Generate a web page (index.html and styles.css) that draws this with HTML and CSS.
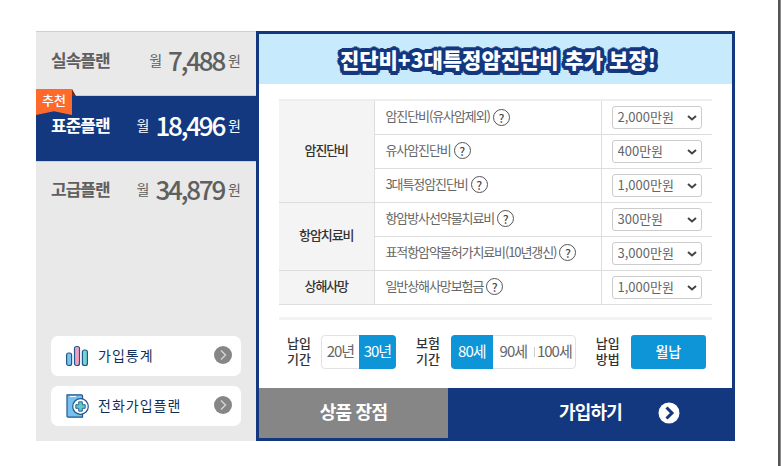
FILE: index.html
```html
<!DOCTYPE html>
<html lang="ko">
<head>
    <meta charset="UTF-8">
    <meta name="viewport" content="width=device-width, initial-scale=1.0">
    <title>암보험 플랜</title>
    <link rel="stylesheet" href="styles.css">
</head>
<body>
    <div class="wrap">
        <!-- Plan list -->
        <div class="plans">
            <div class="plan">
                <span class="plan-name">실속플랜</span>
                <span class="plan-price"><span class="unit mon">월</span><b>7,488</b><span class="unit">원</span></span>
            </div>
            <div class="plan active">
                <span class="badge">추천</span>
                <span class="plan-name">표준플랜</span>
                <span class="plan-price"><span class="unit mon">월</span><b>18,496</b><span class="unit">원</span></span>
            </div>
            <div class="plan">
                <span class="plan-name">고급플랜</span>
                <span class="plan-price"><span class="unit mon">월</span><b>34,879</b><span class="unit">원</span></span>
            </div>
            <div class="side-links">
                <a class="side-link">
                    <svg class="side-icon" width="22" height="22" viewBox="0 0 22 22">
                        <rect x="0.600" y="8" width="5" height="12.500" rx="2" fill="#7cc4ea" stroke="#23558f" stroke-width="1.200"/>
                        <rect x="8.500" y="1.500" width="5" height="19" rx="2" fill="#f0a3bd" stroke="#23558f" stroke-width="1.200"/>
                        <rect x="16.400" y="5" width="5" height="15.500" rx="2" fill="#6fd6cf" stroke="#23558f" stroke-width="1.200"/>
                    </svg>
                    <span class="side-text">가입통계</span>
                    <span class="side-arrow"><svg width="18" height="18" viewBox="0 0 18 18"><path d="M7 4.500 11.500 9 7 13.500" fill="none" stroke="#d5d5d5" stroke-width="1.400"/></svg></span>
                </a>
                <a class="side-link">
                    <svg class="side-icon" width="23" height="24" viewBox="0 0 23 24">
                        <path d="M1 .8h14.500a1 1 0 0 1 1 1V23.200H2a1 1 0 0 1-1-1z" fill="#75c0ee" stroke="#23558f" stroke-width="1.200"/>
                        <path d="M4 2.600h6" stroke="#fff" stroke-width="1"/>
                        <circle cx="14.500" cy="12.500" r="7.800" fill="#fff" stroke="#23558f" stroke-width="1.200"/>
                        <path d="M12.700 7.800h3.600v2.900h2.900v3.600h-2.900v2.900h-3.600v-2.900H9.800v-3.600h2.900z" fill="#58cfc6" stroke="#23558f" stroke-width=".9"/>
                    </svg>
                    <span class="side-text">전화가입플랜</span>
                    <span class="side-arrow"><svg width="18" height="18" viewBox="0 0 18 18"><path d="M7 4.500 11.500 9 7 13.500" fill="none" stroke="#d5d5d5" stroke-width="1.400"/></svg></span>
                </a>
            </div>
        </div>

        <!-- Coverage panel -->
        <div class="panel">
            <h2 class="panel-title"><span>진단비+3대특정암진단비 추가 보장!</span></h2>
            <div class="panel-body">
                <table class="cover">
                    <tr>
                        <th rowspan="3">암진단비</th>
                        <td class="cover-name">암진단비(유사암제외)<i class="help">?</i></td>
                        <td class="cover-sel"><select><option>2,000만원</option></select></td>
                    </tr>
                    <tr>
                        <td class="cover-name">유사암진단비<i class="help">?</i></td>
                        <td class="cover-sel"><select><option>400만원</option></select></td>
                    </tr>
                    <tr>
                        <td class="cover-name">3대특정암진단비<i class="help">?</i></td>
                        <td class="cover-sel"><select><option>1,000만원</option></select></td>
                    </tr>
                    <tr>
                        <th rowspan="2">항암치료비</th>
                        <td class="cover-name">항암방사선약물치료비<i class="help">?</i></td>
                        <td class="cover-sel"><select><option>300만원</option></select></td>
                    </tr>
                    <tr>
                        <td class="cover-name">표적항암약물허가치료비(10년갱신)<i class="help">?</i></td>
                        <td class="cover-sel"><select><option>3,000만원</option></select></td>
                    </tr>
                    <tr>
                        <th>상해사망</th>
                        <td class="cover-name">일반상해사망보험금<i class="help">?</i></td>
                        <td class="cover-sel"><select><option>1,000만원</option></select></td>
                    </tr>
                </table>

                <div class="terms">
                    <div class="term term-pay">
                        <span class="term-label">납입<br>기간</span>
                        <div class="seg">
                            <span class="seg-item">20년</span>
                            <span class="seg-item on">30년</span>
                        </div>
                    </div>
                    <div class="term term-ins">
                        <span class="term-label">보험<br>기간</span>
                        <div class="seg">
                            <span class="seg-item on">80세</span>
                            <span class="seg-item">90세</span>
                            <span class="seg-item sep">100세</span>
                        </div>
                    </div>
                    <div class="term term-way">
                        <span class="term-label">납입<br>방법</span>
                        <span class="way-btn">월납</span>
                    </div>
                </div>
            </div>
            <div class="actions">
                <a class="btn-merit"><span>상품 장점</span></a>
                <a class="btn-join"><span>가입하기</span>
                    <svg width="22" height="22" viewBox="0 0 22 22"><circle cx="11" cy="11" r="10.500" fill="#fff"/><path d="M8.500 5.500 14 11l-5.500 5.500" fill="none" stroke="#14387f" stroke-width="3"/></svg>
                </a>
            </div>
        </div>
    </div>
    <div class="edge"></div>
</body>
</html>
```

FILE: styles.css
```css
html, body {
    height: 100%;
}
body {
    margin: 0;
    background-color: #fff;
    font-family: "Noto Sans CJK KR", "Noto Sans", sans-serif;
    overflow: hidden;
}
.wrap {
    display: flex;
    width: 699px;
    height: 410px;
    margin: 31px 0 0 36px;
}

/* left side */
.plans {
    width: 220px;
    background-color: #e9e9e9;
    display: flex;
    flex-direction: column;
}
.plan {
    position: relative;
    height: 64px;
    box-sizing: border-box;
    border-top: 1px solid #cfcfcf;
    padding: 0 15px 8px;
    display: flex;
    align-items: center;
    justify-content: space-between;
    color: #5f5f5f;
}
.plan + .plan {
    height: 66px;
}
.plan:nth-child(3) {
    padding-bottom: 12px;
}
.plan-name {
    font-size: 17px;
    font-weight: 700;
    letter-spacing: -1px;
}
.plan-price {
    display: flex;
    align-items: center;
}
.plan-price b {
    font-size: 26px;
    font-weight: 500;
    letter-spacing: -2.2px;
    margin: 0 4px 0 6px;
}
.unit {
    font-size: 14px;
}
.plan.active {
    background-color: #14387f;
    color: #fff;
}
.badge {
    position: absolute;
    left: 0;
    top: -7px;
    width: 36px;
    height: 26px;
    box-sizing: border-box;
    padding-top: 1px;
    background-color: #ff6a2b;
    color: #fff;
    font-size: 13px;
    font-weight: 500;
    line-height: 19px;
    text-align: center;
    clip-path: polygon(0 0, 100% 0, 100% 100%, 50% 86%, 0 100%);
}
.plan.active::before {
    content: "";
    position: absolute;
    left: 36px;
    top: -7px;
    border-left: 4px solid #7c2a10;
    border-top: 7px solid transparent;
}
.side-links {
    margin-top: auto;
    padding: 0 15px 15px;
    display: flex;
    flex-direction: column;
    gap: 10px;
}
.side-link {
    height: 40px;
    background-color: #fff;
    border-radius: 7px;
    display: flex;
    align-items: center;
    padding: 0 9px 0 15px;
    color: #12305a;
    font-size: 14px;
}
.side-icon {
    flex: none;
}
.side-text {
    margin: 0 0 2px 10px;
    letter-spacing: 1px;
}
.side-link + .side-link .side-text {
    margin-left: 9px;
}
.side-arrow {
    margin: 0 0 2px auto;
    width: 18px;
    height: 18px;
    border-radius: 50%;
    background-color: #868686;
}

/* right side */
.panel {
    width: 479px;
    box-sizing: border-box;
    border: 3px solid #14387f;
    display: flex;
    flex-direction: column;
}
.panel-title {
    margin: 0;
    height: 50px;
    padding-left: 5px;
    box-sizing: border-box;
    background-color: #c7ebfd;
    display: flex;
    align-items: center;
    justify-content: center;
    font-size: 21px;
    font-weight: 900;
    color: #fff;
    text-shadow:
        4px 0 #14387f, -4px 0 #14387f, 0 4px #14387f, 0 -4px #14387f,
        3.500px 2px #14387f, -3.500px 2px #14387f, 3.500px -2px #14387f, -3.500px -2px #14387f,
        2px 3.500px #14387f, -2px 3.500px #14387f, 2px -3.500px #14387f, -2px -3.500px #14387f,
        2px 0 #14387f, -2px 0 #14387f, 0 2px #14387f, 0 -2px #14387f;
}
.panel-body {
    flex: 1;
    padding: 15px 20px 0;
}
.cover {
    width: 433px;
    border-collapse: collapse;
    table-layout: fixed;
    font-size: 13px;
    letter-spacing: -1.100px;
    color: #666;
    border-top: 2px solid #eee;
}
.cover th {
    width: 95px;
    padding: 0 0 3px;
    box-sizing: border-box;
    background-color: #f4f4f4;
    color: #333;
    font-weight: 500;
    border-bottom: 1px solid #ddd;
}
.cover td {
    height: 34px;
    box-sizing: border-box;
    padding: 0;
    border-bottom: 1px solid #ddd;
}
.cover .cover-name {
    padding: 0 0 3px 11px;
    border-left: 1px solid #ddd;
}
.cover .cover-sel {
    width: 111px;
    border-left: 1px solid #ddd;
    padding-left: 10px;
}
.help {
    display: inline-block;
    width: 17px;
    height: 17px;
    margin-left: 3px;
    box-sizing: border-box;
    border: 1px solid #555;
    border-radius: 50%;
    color: #444;
    font-size: 12px;
    font-style: normal;
    font-weight: 500;
    line-height: 15px;
    letter-spacing: 0;
    text-align: center;
    vertical-align: middle;
}
.cover select {
    display: block;
    width: 90px;
    height: 23px;
    padding: 0 0 2px 5px;
    appearance: none;
    background: #fff url("data:image/svg+xml,%3Csvg xmlns='http://www.w3.org/2000/svg' width='10' height='6'%3E%3Cpath d='M1 1l4 3.500L9 1' fill='none' stroke='%23444' stroke-width='2'/%3E%3C/svg%3E") no-repeat 74px 8px;
    border: 1px solid #ccc;
    border-radius: 3px;
    color: #666;
    font-family: inherit;
    font-size: 13px;
}
.terms {
    margin-top: 12px;
    padding-top: 15px;
    border-top: 3px solid #f3f3f3;
    width: 433px;
    display: flex;
}
.term {
    display: flex;
    align-items: center;
}
.term-pay {
    margin-left: 8px;
}
.term-ins,
.term-way {
    margin-left: 20px;
}
.term-label {
    margin: 0 11px 2px 0;
    font-size: 13px;
    line-height: 16px;
    font-weight: 500;
    color: #333;
    text-align: center;
}
.term-pay .term-label {
    margin-right: 10px;
}
.seg {
    display: flex;
    height: 34px;
    box-sizing: border-box;
    border: 1px solid #e2e2e2;
    border-radius: 4px;
    font-size: 15px;
    color: #666;
    letter-spacing: -1px;
}
.seg-item {
    position: relative;
    width: 37px;
    padding-bottom: 2px;
    box-sizing: border-box;
    display: flex;
    align-items: center;
    justify-content: center;
}
.term-ins .seg-item {
    width: 41px;
}
.seg-item.on {
    background-color: #0d95d8;
    color: #fff;
    margin: -1px -1px -1px 0;
    border-radius: 0 4px 4px 0;
}
.term-ins .seg-item.on {
    width: 42px;
    margin: -1px 0 -1px -1px;
    border-radius: 4px 0 0 4px;
}
.seg-item.sep::before {
    content: "";
    position: absolute;
    left: 0;
    top: 11px;
    width: 1px;
    height: 10px;
    background-color: #ccc;
}
.way-btn {
    width: 75px;
    height: 34px;
    padding-bottom: 2px;
    box-sizing: border-box;
    border-radius: 3px;
    background-color: #0d95d8;
    color: #fff;
    font-size: 14px;
    font-weight: 500;
    display: flex;
    align-items: center;
    justify-content: center;
}
.actions {
    display: flex;
    height: 50px;
    color: #fff;
    font-size: 18px;
    font-weight: 700;
    letter-spacing: -0.8px;
}
.actions span {
    padding-bottom: 4px;
}
.btn-merit {
    width: 189px;
    background-color: #868686;
    display: flex;
    align-items: center;
    justify-content: center;
}
.btn-join {
    flex: 1;
    background-color: #14387f;
    display: flex;
    align-items: center;
    padding-left: 111px;
    gap: 36px;
}
.edge {
    position: fixed;
    top: 0;
    right: 0;
    width: 2px;
    height: 100%;
    background-color: #555;
    border-right: 1px solid #8a8a8a;
}
```
